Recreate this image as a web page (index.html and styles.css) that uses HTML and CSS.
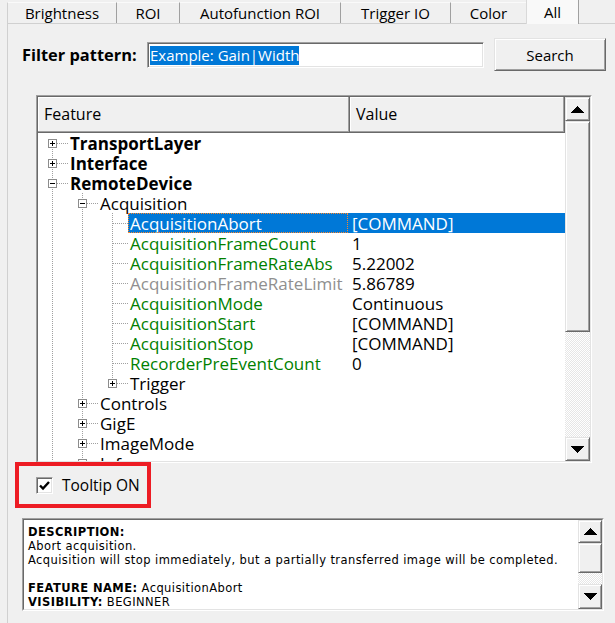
FILE: index.html
```html
<!DOCTYPE html>
<html>
<head>
<meta charset="utf-8">
<title>Properties</title>
<link rel="stylesheet" href="styles.css">
</head>
<body>
<div class="tabs">
  <div class="tab first w1">Brightness</div>
  <div class="tab w2">ROI</div>
  <div class="tab w3">Autofunction ROI</div>
  <div class="tab w4">Trigger IO</div>
  <div class="tab w5">Color</div>
  <div class="tab sel">All</div>
</div>
<div class="panel">
  <div class="filter">
    <div class="flabel">Filter pattern:</div>
    <div class="input"><span class="hl">Example: Gain|Width</span></div>
    <div class="btn">Search</div>
  </div>

  <div class="tree">
    <div class="tree-in">
      <div class="tmain">
        <div class="thead">
          <div class="th th-f">Feature</div>
          <div class="th th-v">Value</div>
        </div>
        <div class="tbody">
          <div class="row"><div class="feat"><div class="g f"><svg class="box" width="9" height="9" viewBox="0 0 9 9"><rect x="0.5" y="0.5" width="8" height="8" fill="#fff" stroke="#8c8c8c"/><path d="M2 4.5h5M4.5 2v5" stroke="#000"/></svg></div><div class="lbl b">TransportLayer</div></div><div class="val"></div></div>
          <div class="row"><div class="feat"><div class="g t"><svg class="box" width="9" height="9" viewBox="0 0 9 9"><rect x="0.5" y="0.5" width="8" height="8" fill="#fff" stroke="#8c8c8c"/><path d="M2 4.5h5M4.5 2v5" stroke="#000"/></svg></div><div class="lbl b">Interface</div></div><div class="val"></div></div>
          <div class="row"><div class="feat"><div class="g t"><svg class="box" width="9" height="9" viewBox="0 0 9 9"><rect x="0.5" y="0.5" width="8" height="8" fill="#fff" stroke="#8c8c8c"/><path d="M2 4.5h5" stroke="#000"/></svg></div><div class="lbl b">RemoteDevice</div></div><div class="val"></div></div>
          <div class="row"><div class="feat"><div class="g v"></div><div class="g t"><svg class="box" width="9" height="9" viewBox="0 0 9 9"><rect x="0.5" y="0.5" width="8" height="8" fill="#fff" stroke="#8c8c8c"/><path d="M2 4.5h5" stroke="#000"/></svg></div><div class="lbl">Acquisition</div></div><div class="val"></div></div>
          <div class="row sel"><div class="feat"><div class="g v"></div><div class="g v"></div><div class="g t"></div><div class="lbl grn">AcquisitionAbort</div></div><div class="val">[COMMAND]</div></div>
          <div class="row"><div class="feat"><div class="g v"></div><div class="g v"></div><div class="g t"></div><div class="lbl grn">AcquisitionFrameCount</div></div><div class="val">1</div></div>
          <div class="row"><div class="feat"><div class="g v"></div><div class="g v"></div><div class="g t"></div><div class="lbl grn">AcquisitionFrameRateAbs</div></div><div class="val">5.22002</div></div>
          <div class="row"><div class="feat"><div class="g v"></div><div class="g v"></div><div class="g t"></div><div class="lbl gry">AcquisitionFrameRateLimit</div></div><div class="val">5.86789</div></div>
          <div class="row"><div class="feat"><div class="g v"></div><div class="g v"></div><div class="g t"></div><div class="lbl grn">AcquisitionMode</div></div><div class="val">Continuous</div></div>
          <div class="row"><div class="feat"><div class="g v"></div><div class="g v"></div><div class="g t"></div><div class="lbl grn">AcquisitionStart</div></div><div class="val">[COMMAND]</div></div>
          <div class="row"><div class="feat"><div class="g v"></div><div class="g v"></div><div class="g t"></div><div class="lbl grn">AcquisitionStop</div></div><div class="val">[COMMAND]</div></div>
          <div class="row"><div class="feat"><div class="g v"></div><div class="g v"></div><div class="g t"></div><div class="lbl grn">RecorderPreEventCount</div></div><div class="val">0</div></div>
          <div class="row"><div class="feat"><div class="g v"></div><div class="g v"></div><div class="g l"><svg class="box" width="9" height="9" viewBox="0 0 9 9"><rect x="0.5" y="0.5" width="8" height="8" fill="#fff" stroke="#8c8c8c"/><path d="M2 4.5h5M4.5 2v5" stroke="#000"/></svg></div><div class="lbl">Trigger</div></div><div class="val"></div></div>
          <div class="row"><div class="feat"><div class="g v"></div><div class="g t"><svg class="box" width="9" height="9" viewBox="0 0 9 9"><rect x="0.5" y="0.5" width="8" height="8" fill="#fff" stroke="#8c8c8c"/><path d="M2 4.5h5M4.5 2v5" stroke="#000"/></svg></div><div class="lbl">Controls</div></div><div class="val"></div></div>
          <div class="row"><div class="feat"><div class="g v"></div><div class="g t"><svg class="box" width="9" height="9" viewBox="0 0 9 9"><rect x="0.5" y="0.5" width="8" height="8" fill="#fff" stroke="#8c8c8c"/><path d="M2 4.5h5M4.5 2v5" stroke="#000"/></svg></div><div class="lbl">GigE</div></div><div class="val"></div></div>
          <div class="row"><div class="feat"><div class="g v"></div><div class="g t"><svg class="box" width="9" height="9" viewBox="0 0 9 9"><rect x="0.5" y="0.5" width="8" height="8" fill="#fff" stroke="#8c8c8c"/><path d="M2 4.5h5M4.5 2v5" stroke="#000"/></svg></div><div class="lbl">ImageMode</div></div><div class="val"></div></div>
          <div class="row"><div class="feat"><div class="g v"></div><div class="g t"><svg class="box" width="9" height="9" viewBox="0 0 9 9"><rect x="0.5" y="0.5" width="8" height="8" fill="#fff" stroke="#8c8c8c"/><path d="M2 4.5h5M4.5 2v5" stroke="#000"/></svg></div><div class="lbl">Info</div></div><div class="val"></div></div>
        </div>
      </div>
      <div class="sb">
        <div class="sbtn up"><svg width="13" height="7" viewBox="0 0 13 7" shape-rendering="crispEdges"><polygon points="0,7 6.5,0 13,7" fill="#000"/></svg></div>
        <div class="thumb t1"></div>
        <div class="track"></div>
        <div class="sbtn dn"><svg width="13" height="7" viewBox="0 0 13 7" shape-rendering="crispEdges"><polygon points="0,0 6.5,7 13,0" fill="#000"/></svg></div>
      </div>
    </div>
  </div>

  <div class="tip">
    <span class="cb"><svg width="15" height="15" viewBox="0 0 15 15"><path d="M3 7.5 L6 10.5 L12 4" fill="none" stroke="#000" stroke-width="2.4"/></svg></span>
    <span class="tiptext">Tooltip ON</span>
  </div>

  <div class="desc">
    <div class="desc-in">
      <div class="dtext">
        <div><b>DESCRIPTION:</b></div>
        <div>Abort acquisition.</div>
        <div>Acquisition will stop immediately, but a partially transferred image will be completed.</div>
        <div>&nbsp;</div>
        <div><b>FEATURE NAME:</b> AcquisitionAbort</div>
        <div><b>VISIBILITY:</b> BEGINNER</div>
      </div>
      <div class="sb sb2">
        <div class="sbtn up2"><svg width="13" height="7" viewBox="0 0 13 7" shape-rendering="crispEdges"><polygon points="0,7 6.5,0 13,7" fill="#000"/></svg></div>
        <div class="thumb t2"></div>
        <div class="track"></div>
        <div class="sbtn dn2"><svg width="13" height="7" viewBox="0 0 13 7" shape-rendering="crispEdges"><polygon points="0,0 6.5,7 13,0" fill="#000"/></svg></div>
      </div>
    </div>
  </div>
</div>
</body>
</html>
```
FILE: styles.css
```css
* { box-sizing: border-box; }
html, body { margin: 0; padding: 0; }
body {
  width: 615px;
  height: 623px;
  overflow: hidden;
  background: #f0f0f0;
  font-family: "Open Sans", "Noto Sans", sans-serif;
  font-size: 15px;
  color: #000;
}

/* Tabs */
.tabs {
  display: flex;
  align-items: flex-start;
  height: 23px;
  padding-left: 7px;
  position: relative;
  z-index: 1;
}
.tab {
  height: 21px;
  margin-top: 2px;
  border-right: 1px solid #a0a0a0;
  border-top: 1px solid #fafafa;
  text-align: center;
  line-height: 21px;
  font-size: 15px;
  background: #f0f0f0;
  flex: none;
}
.tab.first { border-left: 1px solid #d0d0d0; }
.w1 { width: 110px; }
.w2 { width: 63px; }
.w3 { width: 161px; }
.w4 { width: 110px; }
.w5 { width: 75px; border-right: none; }
.tab.sel {
  width: 53px;
  height: 24px;
  margin-top: 0;
  background: #f9f9f9;
  border-top: none;
  border-left: 1px solid #d9d9d9;
  border-right: 1px solid #a0a0a0;
  line-height: 24px;
}

/* Panel */
.panel {
  margin-left: 7px;
  height: 600px;
  border-top: 1px solid #d0d0d0;
  border-left: 1px solid #d0d0d0;
}

/* Filter row */
.filter {
  display: flex;
  align-items: center;
  height: 33px;
  margin-top: 14px;
  padding-left: 14px;
}
.flabel {
  width: 125px;
  font-weight: 700;
  font-size: 16.4px;
}
.input {
  width: 337px;
  height: 26px;
  background: #fff;
  border: 1px solid;
  border-color: #a0a0a0 #ffffff #ffffff #a0a0a0;
  box-shadow: inset 1px 1px #696969, inset -1px -1px #e3e3e3;
  padding: 2px 0 0 2px;
  font-size: 15px;
}
.hl {
  display: inline-block;
  background: #0078d7;
  color: #fff;
  line-height: 19px;
  height: 19px;
}
.btn {
  margin-left: 10px;
  width: 112px;
  height: 33px;
  background: #f0f0f0;
  border: 1px solid;
  border-color: #e3e3e3 #696969 #696969 #e3e3e3;
  box-shadow: inset 1px 1px #ffffff, inset -1px -1px #a0a0a0;
  display: flex;
  align-items: center;
  justify-content: center;
  font-size: 15px;
}

/* Tree list */
.tree {
  margin: 24px 0 0 28px;
  width: 556px;
  height: 368px;
  border: 1px solid;
  border-color: #a0a0a0 #ffffff #ffffff #a0a0a0;
}
.tree-in {
  display: flex;
  height: 100%;
  border: 1px solid;
  border-color: #696969 #e3e3e3 #e3e3e3 #696969;
}
.tmain {
  width: 527px;
  flex: none;
  display: flex;
  flex-direction: column;
  background: #fff;
  overflow: hidden;
}
.thead {
  display: flex;
  height: 36px;
  flex: none;
  background: #f0f0f0;
}
.th {
  height: 36px;
  border-right: 1px solid #696969;
  border-bottom: 1px solid #696969;
  box-shadow: inset -1px -1px #a0a0a0, inset 1px 1px #ffffff;
  padding-left: 6px;
  line-height: 34px;
  font-size: 16px;
}
.th-f { width: 312px; }
.th-v { width: 215px; }
.tbody { flex: 1; overflow: hidden; }

.row {
  display: flex;
  height: 20px;
  line-height: 19px;
  font-size: 17px;
  white-space: nowrap;
}
.feat { display: flex; width: 310px; flex: none; }
.g { width: 30px; height: 20px; position: relative; flex: none; }
.g.v::before, .g.t::before, .g.l::before, .g.f::before {
  content: "";
  position: absolute;
  left: 14px;
  top: 0;
  width: 1px;
  height: 20px;
  background: repeating-linear-gradient(to bottom, #a0a0a0 0 1px, transparent 1px 2px);
}
.g.l::before { height: 10px; }
.g.f::before { top: 10px; height: 10px; }
.g.t::after, .g.l::after, .g.f::after {
  content: "";
  position: absolute;
  left: 15px;
  top: 10px;
  width: 15px;
  height: 1px;
  background: repeating-linear-gradient(to right, #a0a0a0 0 1px, transparent 1px 2px);
}
.box { position: absolute; left: 10px; top: 6px; z-index: 1; }
.lbl { flex: 1; min-width: 0; height: 20px; padding: 1px 0 0 2px; }
.val { flex: 1; height: 20px; padding: 1px 0 0 4px; }
.b { font-weight: 700; }
.grn { color: #008000; }
.gry { color: #8f8f8f; }
.row.sel .lbl {
  background: #0078d7;
  color: #fff;
  outline: 1px dotted #ff8728;
  outline-offset: -1px;
}
.row.sel .val { background: #0078d7; color: #fff; }

/* Scrollbars */
.sb {
  width: 25px;
  flex: none;
  display: flex;
  flex-direction: column;
}
.sbtn, .thumb {
  background: #f0f0f0;
  border: 1px solid;
  border-color: #e3e3e3 #696969 #696969 #e3e3e3;
  box-shadow: inset 1px 1px #ffffff, inset -1px -1px #a0a0a0;
  flex: none;
}
.sbtn { display: flex; align-items: center; justify-content: center; }
.up, .dn { height: 24px; }
.t1 { height: 211px; }
.track {
  flex: 1;
  background: repeating-conic-gradient(#ffffff 0 25%, #e6e6e6 0 50%) 0 0 / 2px 2px;
}
.sb2 { width: 24px; }
.up2 { height: 23px; }
.t2 { height: 30px; }
.dn2 { height: 25px; }

/* Tooltip checkbox */
.tip {
  margin: -1px 0 0 7px;
  width: 136px;
  height: 46px;
  border: 4px solid #ed1c24;
  display: flex;
  align-items: center;
  padding-left: 17px;
  position: relative;
  z-index: 2;
}
.cb {
  width: 17px;
  height: 17px;
  background: #fff;
  border: 1px solid;
  border-color: #a0a0a0 #ffffff #ffffff #a0a0a0;
  box-shadow: inset 1px 1px #696969, inset -1px -1px #e3e3e3;
  display: flex;
  align-items: center;
  justify-content: center;
}
.tiptext { margin-left: 9px; font-size: 15.5px; }

/* Description */
.desc {
  margin: 10px 0 0 14px;
  width: 582px;
  height: 93px;
  border: 1px solid;
  border-color: #a0a0a0 #ffffff #ffffff #a0a0a0;
}
.desc-in {
  display: flex;
  height: 100%;
  border: 1px solid;
  border-color: #696969 #e3e3e3 #e3e3e3 #696969;
}
.dtext {
  flex: 1;
  min-width: 0;
  background: #fff;
  padding: 5px 0 0 4px;
  font-family: "DejaVu Sans", Verdana, sans-serif;
  font-size: 11.5px;
  letter-spacing: 0.42px;
  line-height: 14px;
  overflow: hidden;
  white-space: nowrap;
}
```
